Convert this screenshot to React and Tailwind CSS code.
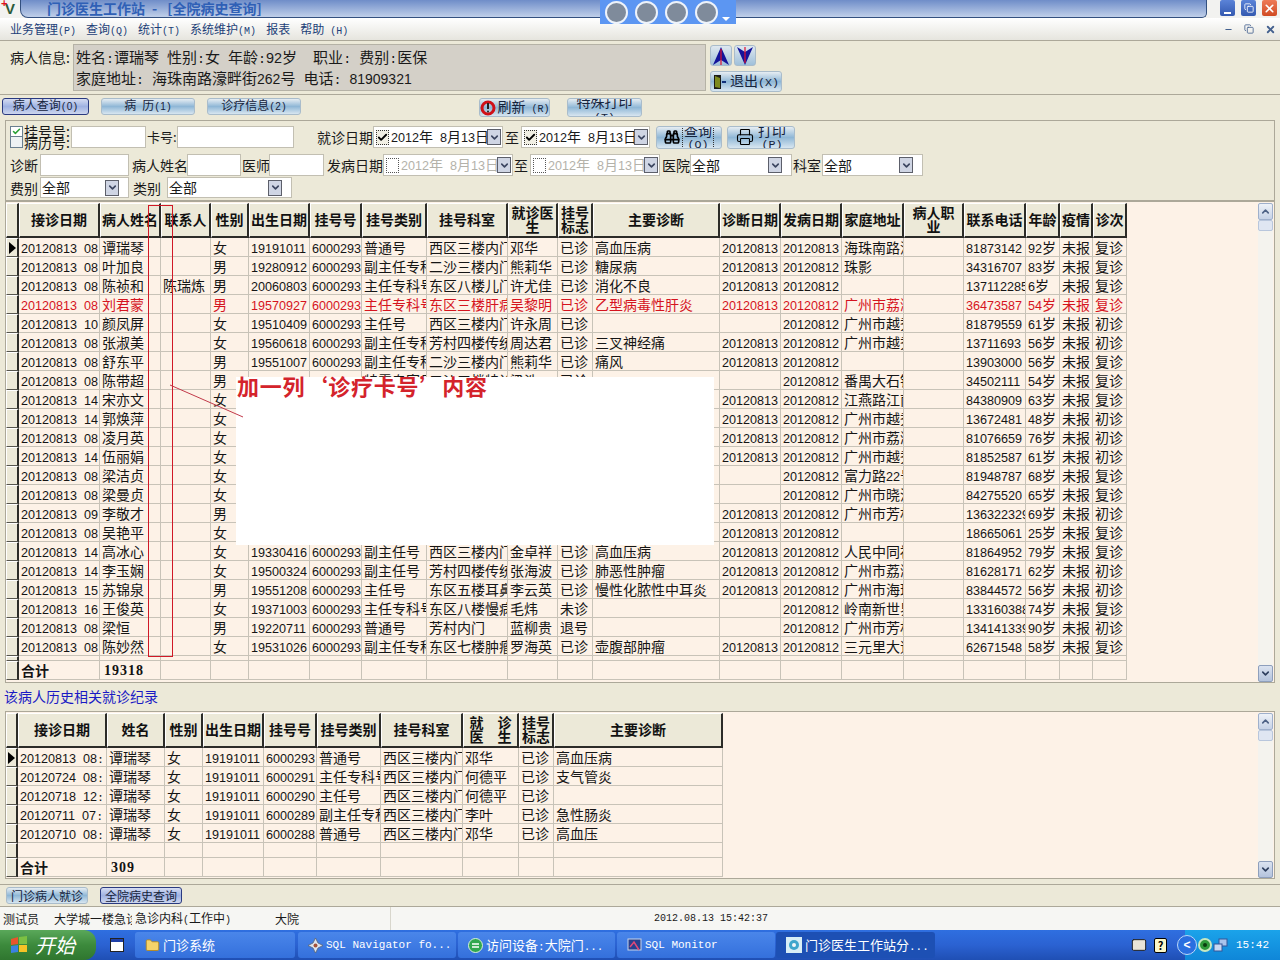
import { Fragment } from 'react';
import { Binoculars, ChevronDown, ChevronUp, Printer, Folder, Keyboard, X, Minus, Copy, Check } from 'lucide-react';

const mainHead = ['接诊日期', '病人姓名', '联系人', '性别', '出生日期', '挂号号', '挂号类别', '挂号科室', '就诊医\n生', '挂号\n标志', '主要诊断', '诊断日期', '发病日期', '家庭地址', '病人职\n业', '联系电话', '年龄', '疫情', '诊次'];

// 时间 姓名 联系人 性别 出生 类别 科室 医生 标志 诊断 诊断日期 发病日期 地址 电话 年龄 诊次
const mainRows = [
  ['08', '谭瑞琴', '', '女', '19191011', '普通号', '西区三楼内门诊', '邓华', '已诊', '高血压病', '20120813', '20120813', '海珠南路濠畔街', '81873142', '92岁', '复诊'],
  ['08', '叶加良', '', '男', '19280912', '副主任专科号', '二沙三楼内门诊', '熊莉华', '已诊', '糖尿病', '20120813', '20120812', '珠影', '34316707', '83岁', '复诊'],
  ['08', '陈祯和', '陈瑞炼', '男', '20060803', '主任专科号', '东区八楼儿门诊', '许尤佳', '已诊', '消化不良', '20120813', '20120812', '', '137112285', '6岁', '复诊'],
  ['08', '刘君蒙', '', '男', '19570927', '主任专科号', '东区三楼肝病科', '吴黎明', '已诊', '乙型病毒性肝炎', '20120813', '20120812', '广州市荔湾区', '36473587', '54岁', '复诊'],
  ['10', '颜凤屏', '', '女', '19510409', '主任号', '西区三楼内门诊', '许永周', '已诊', '', '', '20120812', '广州市越秀区', '81879559', '61岁', '初诊'],
  ['08', '张淑美', '', '女', '19560618', '副主任专科号', '芳村四楼传统科', '周达君', '已诊', '三叉神经痛', '20120813', '20120812', '广州市越秀区', '13711693', '56岁', '初诊'],
  ['08', '舒东平', '', '男', '19551007', '副主任专科号', '二沙三楼内门诊', '熊莉华', '已诊', '痛风', '20120813', '20120812', '', '13903000', '56岁', '复诊'],
  ['08', '陈带超', '', '男', '', '特需专家号', '二沙三楼特诊', '梁浩', '已诊', '', '', '20120812', '番禺大石镇', '34502111', '54岁', '复诊'],
  ['14', '宋亦文', '', '女', '', '', '', '', '', '', '20120813', '20120812', '江燕路江南', '84380909', '63岁', '复诊'],
  ['14', '郭焕萍', '', '女', '', '', '', '', '', '', '20120813', '20120812', '广州市越秀区', '13672481', '48岁', '初诊'],
  ['08', '凌月英', '', '女', '', '', '', '', '', '', '20120813', '20120812', '广州市荔湾区', '81076659', '76岁', '初诊'],
  ['14', '伍丽娟', '', '女', '', '', '', '', '', '', '20120813', '20120812', '广州市越秀区', '81852587', '61岁', '初诊'],
  ['08', '梁洁贞', '', '女', '', '', '', '', '', '', '', '20120812', '富力路22号', '81948787', '68岁', '复诊'],
  ['08', '梁曼贞', '', '女', '', '', '', '', '', '', '', '20120812', '广州市晓港', '84275520', '65岁', '复诊'],
  ['09', '李敬才', '', '男', '', '', '', '', '', '', '20120813', '20120812', '广州市芳村', '136322329', '69岁', '初诊'],
  ['08', '吴艳平', '', '女', '', '', '', '', '', '', '20120813', '20120812', '', '18665061', '25岁', '复诊'],
  ['14', '高冰心', '', '女', '19330416', '副主任号', '西区三楼内门诊', '金卓祥', '已诊', '高血压病', '20120813', '20120812', '人民中同福', '81864952', '79岁', '复诊'],
  ['14', '李玉娴', '', '女', '19500324', '副主任号', '芳村四楼传统科', '张海波', '已诊', '肺恶性肿瘤', '20120813', '20120812', '广州市荔湾区', '81628171', '62岁', '初诊'],
  ['15', '苏锦泉', '', '男', '19551208', '主任号', '东区五楼耳鼻喉', '李云英', '已诊', '慢性化脓性中耳炎', '20120813', '20120812', '广州市海珠区', '83844572', '56岁', '初诊'],
  ['16', '王俊英', '', '女', '19371003', '主任专科号', '东区八楼慢病科', '毛炜', '未诊', '', '', '20120812', '岭南新世界', '133160388', '74岁', '复诊'],
  ['08', '梁恒', '', '男', '19220711', '普通号', '芳村内门', '蓝柳贵', '退号', '', '', '20120812', '广州市芳村', '134141339', '90岁', '初诊'],
  ['08', '陈妙然', '', '女', '19531026', '副主任专科号', '东区七楼肿瘤科', '罗海英', '已诊', '壶腹部肿瘤', '20120813', '20120812', '三元里大道', '62671548', '58岁', '复诊'],
];

const histHead = ['接诊日期', '姓名', '性别', '出生日期', '挂号号', '挂号类别', '挂号科室', '就　诊\n医　生', '挂号\n标志', '主要诊断'];
const histRows = [
  ['20120813 08:', '谭瑞琴', '女', '19191011', '6000293', '普通号', '西区三楼内门诊', '邓华', '已诊', '高血压病'],
  ['20120724 08:', '谭瑞琴', '女', '19191011', '6000291', '主任专科号', '西区三楼内门诊', '何德平', '已诊', '支气管炎'],
  ['20120718 12:', '谭瑞琴', '女', '19191011', '6000290', '主任号', '西区三楼内门诊', '何德平', '已诊', ''],
  ['20120711 07:', '谭瑞琴', '女', '19191011', '6000289', '副主任专科号', '西区三楼内门诊', '李叶', '已诊', '急性肠炎'],
  ['20120710 08:', '谭瑞琴', '女', '19191011', '6000288', '普通号', '西区三楼内门诊', '邓华', '已诊', '高血压'],
];

function toMainCells(r) {
  return [`20120813 ${r[0]}`, r[1], r[2], r[3], r[4], r[4] ? '6000293' : '', r[5], r[6], r[7], r[8], r[9], r[10], r[11], r[12], '', r[13], r[14], '未报', r[15]];
}

// digits and latin get their own faces, close to the bitmap font of the original
function T({ children, mono = 'text-[11.67px]', digit = 'text-[12.6px]' }) {
  if (children == null || children === '') return null;
  const parts = String(children).split(/([0-9]+|[\x20-\x7e]+?(?=[0-9]|[^\x20-\x7e]|$))/);
  return parts.map((p, i) => {
    if (!p) return null;
    if (/^[0-9]+$/.test(p)) return <span key={i} className={`font-['Liberation_Sans',sans-serif] ${digit}`}>{p}</span>;
    if (/^[\x20-\x7e]+$/.test(p)) return <span key={i} className={`whitespace-pre font-['Liberation_Mono',monospace] ${mono}`}>{p}</span>;
    return <Fragment key={i}>{p}</Fragment>;
  });
}

function HeadCell({ children }) {
  return (
    <div className="flex items-center justify-center overflow-hidden bg-[#ece9d8] border-t border-l border-t-white border-l-white border-r-2 border-b-2 border-r-[#2c2c28] border-b-[#2c2c28] pb-[2px] text-center text-[14px] font-bold leading-[14px] whitespace-pre text-[#111]">
      {children}
    </div>
  );
}

function Indicator({ active }) {
  return (
    <div className="flex items-center justify-center bg-[#ece9d8] border-t border-l border-t-white border-l-white border-r-2 border-b border-r-[#2c2c28] border-b-[#55544c]">
      {active && <div className="h-0 w-0 border-y-[6px] border-l-[7px] border-y-transparent border-l-black" />}
    </div>
  );
}

function Cell({ children, red, bold }) {
  return (
    <div className={`overflow-hidden whitespace-nowrap border-r border-b border-[#c8c3b8] bg-[#fdf2e7] pl-[2px] text-[14px] leading-[18px] ${red ? 'text-[#d5141e]' : 'text-[#151515]'} ${bold ? 'font-bold' : ''}`}>
      <T>{children}</T>
    </div>
  );
}

function ScrollBar() {
  return (
    <div className="flex w-[15px] flex-col justify-between bg-[#f4f3ee]">
      <div>
        <div className="flex h-[17px] items-center justify-center rounded-[2px] border border-[#9fb0cc] bg-gradient-to-b from-[#eef2f8] to-[#c6d2e6]">
          <ChevronUp size={11} strokeWidth={3.5} className="text-[#4d6185]" />
        </div>
        <div className="h-[11px] rounded-[2px] border border-[#b8c6dc] bg-[#dfe6f2]" />
      </div>
      <div className="flex h-[17px] items-center justify-center rounded-[2px] border border-[#8e9fbc] bg-gradient-to-b from-[#dbe3f0] to-[#b4c3dc]">
        <ChevronDown size={11} strokeWidth={3.5} className="text-[#2e3f5f]" />
      </div>
    </div>
  );
}

function Grid({ cols, head, rows, total, spacer, width }) {
  const n = head.length;
  return (
    <div className={`${width} shrink-0`}>
      <div className={`grid h-[35px] ${cols}`}>
        <HeadCell />
        {head.map((h) => <HeadCell key={h}>{h}</HeadCell>)}
      </div>
      <div className={`grid auto-rows-[19px] ${cols}`}>
        {rows.map((r, i) => (
          <Fragment key={i}>
            <Indicator active={i === 0} />
            {r.cells.map((c, j) => <Cell key={j} red={r.red}>{c}</Cell>)}
          </Fragment>
        ))}
      </div>
      <div className={`grid ${spacer} ${cols}`}>
        <Indicator />
        {Array.from({ length: n }).map((_, j) => <Cell key={j} />)}
      </div>
      <div className={`grid h-[19px] ${cols}`}>
        <Indicator />
        <Cell bold>合计</Cell>
        <div className="overflow-hidden border-r border-b border-[#c8c3b8] bg-[#fdf2e7] pl-[4px] font-['Liberation_Serif',serif] text-[14px] font-bold leading-[20px] tracking-[1px] text-[#111]">{total}</div>
        {Array.from({ length: n - 2 }).map((_, j) => <Cell key={j} />)}
      </div>
    </div>
  );
}

function SkinButton({ children, active, className = '' }) {
  return (
    <div className={`flex shrink-0 items-center justify-center overflow-hidden rounded-[3px] border text-[14px] leading-[14px] text-[#15233c] ${active ? 'border-[#2a3a80] bg-gradient-to-b from-[#d5dcf2] via-[#9fb2e2] to-[#cdd6ee]' : 'border-[#a9bccb] bg-gradient-to-b from-[#e6edf2] via-[#8fb7d6] to-[#d8e6f0]'} ${className}`}>
      {children}
    </div>
  );
}

function Field({ className }) {
  return <div className={`shrink-0 border border-[#c2bfb2] bg-white ${className}`} />;
}

function Label({ children, className }) {
  return <div className={`shrink-0 whitespace-nowrap text-[14px] leading-[20px] text-[#1a1a1a] ${className}`}><T>{children}</T></div>;
}

function DropBtn() {
  return (
    <div className="flex h-[16px] w-[14px] shrink-0 items-center justify-center border border-[#5c5f6a] bg-[#cfd5e4]">
      <ChevronDown size={11} strokeWidth={3.5} className="text-[#3b4560]" />
    </div>
  );
}

function Combo({ className, value = '全部' }) {
  return (
    <div className={`flex shrink-0 items-center justify-between border border-[#c2bfb2] bg-white pl-[1px] pr-[9px] text-[14px] text-[#1a1a1a] ${className}`}>
      <span>{value}</span>
      <DropBtn />
    </div>
  );
}

function DatePicker({ className, disabled }) {
  return (
    <div className={`flex shrink-0 items-center border border-[#c2bfb2] bg-white pl-[2px] pr-[1px] text-[14px] ${disabled ? 'text-[#b4b2aa]' : 'text-[#1a1a1a]'} ${className}`}>
      <div className={`flex h-[15px] w-[13px] shrink-0 items-center justify-center border border-dotted ${disabled ? 'border-[#555]' : 'border-[#333] bg-[#f1efe4]'}`}>
        {!disabled && <Check size={11} strokeWidth={4} className="text-black" />}
      </div>
      <div className="min-w-0 flex-1 overflow-hidden whitespace-nowrap pl-[2px]"><T>2012年 8月13日</T></div>
      <DropBtn />
    </div>
  );
}

function TaskBtn({ children, active, className }) {
  return (
    <div className={`flex h-[26px] shrink-0 items-center gap-[3px] overflow-hidden rounded-[3px] pl-[10px] text-[13px] text-white ${active ? 'bg-[#1d50b4]' : 'bg-gradient-to-b from-[#4a86ea] to-[#3470dc]'} ${className}`}>
      {children}
    </div>
  );
}

function ArrowIcon({ down }) {
  return (
    <svg width="18" height="20" viewBox="0 0 18 20">
      <path d={down ? 'M1 1 L9 6 L17 1 L9 19 Z' : 'M9 1 L17 19 L9 14 L1 19 Z'} fill="#14149a" />
      <path d={down ? 'M9 1 V17' : 'M9 3 V19'} stroke="#e01030" strokeWidth="1.2" />
    </svg>
  );
}

export default function App() {
  const grid1 = "grid-cols-[13px_81px_61px_50px_38px_61px_52px_65px_81px_50px_35px_127px_61px_61px_62px_60px_62px_34px_33px_34px]";
  const grid2 = "grid-cols-[12px_89px_58px_38px_61px_53px_64px_82px_56px_35px_169px]";

  return (
    <div className="relative h-[960px] w-[1280px] overflow-hidden bg-[#ece9d8] font-['Noto_Sans_CJK_SC','Liberation_Sans',sans-serif]">
      {/* 标题栏 */}
      <div className="flex h-[18px] bg-[#f2f2f0]">
        <div className="relative flex w-[20px] items-center justify-center font-['Liberation_Sans',sans-serif] text-[15px] font-bold leading-[16px] text-[#2c5a3a]">
          V
          <span className="absolute left-[1px] top-[-2px] text-[11px] leading-[11px] text-[#e0101c]">+</span>
        </div>
        <div className="flex h-[18px] w-[1187px] items-center rounded-bl-[8px] rounded-br-[5px] border-b border-r border-l border-[#33507f] bg-gradient-to-b from-[#6f8dc8] to-[#c0cfe9] pl-[26px] text-[14px] font-bold text-[#2f60b6]">
          门诊医生工作站 <span className="ml-[7px]">-</span> <span className="ml-[10px]">[全院病史查询]</span>
        </div>
        <div className="flex flex-1 items-start justify-end gap-[4px] pr-[3px]">
          <div className="flex h-[16px] w-[15px] items-end justify-center rounded-[2px] bg-gradient-to-b from-[#5b83d8] to-[#3459b0] pb-[2px]"><div className="h-[2px] w-[7px] bg-white" /></div>
          <div className="ml-[2px] flex h-[16px] w-[15px] items-center justify-center rounded-[2px] bg-gradient-to-b from-[#5b83d8] to-[#3459b0]"><Copy size={10} strokeWidth={2} className="text-white" /></div>
          <div className="ml-[2px] flex h-[16px] w-[15px] items-center justify-center rounded-[2px] bg-gradient-to-b from-[#ee7a56] to-[#d04a22]"><X size={13} strokeWidth={3} className="text-white" /></div>
        </div>
      </div>

      {/* 菜单 */}
      <div className="flex h-[23px] items-center border-b border-[#aca899] bg-gradient-to-b from-white to-[#e6e5de] pl-[10px] text-[12px] text-[#1d3f78]">
        <div className="flex gap-[10px]">
          <span><T mono="text-[10px]">业务管理(P)</T></span>
          <span><T mono="text-[10px]">查询(Q)</T></span>
          <span><T mono="text-[10px]">统计(T)</T></span>
          <span><T mono="text-[10px]">系统维护(M)</T></span>
          <span>报表</span>
          <span><T mono="text-[10px]">帮助 (H)</T></span>
        </div>
        <div className="ml-auto flex items-center gap-[11px] pr-[4px] text-[#44618f]">
          <Minus size={9} strokeWidth={3} />
          <Copy size={10} strokeWidth={2} />
          <X size={11} strokeWidth={4} />
        </div>
      </div>

      {/* 病人信息 */}
      <div className="flex h-[54px] border-b border-[#aca899]">
        <div className="w-[73px] shrink-0 pl-[10px] pt-[6px] text-[14px] leading-[20px] text-[#1a1a1a]">病人信息:</div>
        <div className="mt-[3px] h-[47px] w-[633px] shrink-0 border border-[#b5b2a6] bg-[#d4d0c8] pl-[2px] pt-[3px] text-[15px] leading-[18px] text-[#1a1a1a]">
          <div><T mono="text-[13.33px]" digit="text-[14.4px]">姓名:谭瑞琴 性别:女 年龄:92岁  职业: 费别:医保</T></div>
          <div><T mono="text-[13.33px]" digit="text-[14px]">家庭地址: 海珠南路濠畔街262号 电话: 81909321</T></div>
        </div>
        <div className="ml-[4px] mt-[4px] flex flex-col">
          <div className="flex gap-[2px]">
            <div className="flex h-[21px] w-[22px] items-center justify-center rounded-[3px] border border-[#a9bccb] bg-gradient-to-b from-[#dfe8ef] to-[#9fc0da]"><ArrowIcon /></div>
            <div className="flex h-[21px] w-[22px] items-center justify-center rounded-[3px] border border-[#a9bccb] bg-gradient-to-b from-[#dfe8ef] to-[#9fc0da]"><ArrowIcon down /></div>
          </div>
          <SkinButton className="mt-[5px] h-[21px] w-[72px] gap-[3px]">
            <svg width="14" height="16" viewBox="0 0 14 16">
              <path d="M1 1 H8 V15 H1 Z" fill="#1c1c18" />
              <path d="M2 2 L7 4 V14 L2 13 Z" fill="#7d8a1e" />
              <path d="M9 8 H13" stroke="#12307a" strokeWidth="2" />
            </svg>
            <span><T>退出(X)</T></span>
          </SkinButton>
        </div>
      </div>

      {/* 页签 */}
      <div className="flex h-[25px] items-start pl-[2px] pt-[3px]">
        <SkinButton active className="h-[17px] w-[87px]"><span className="text-[12px]"><T mono="text-[10px]" digit="text-[10px]">病人查询(0)</T></span></SkinButton>
        <SkinButton className="ml-[12px] h-[17px] w-[94px]"><span className="text-[12px]"><T mono="text-[10px]" digit="text-[10px]">病 历(1)</T></span></SkinButton>
        <SkinButton className="ml-[12px] h-[17px] w-[94px]"><span className="text-[12px]"><T mono="text-[10px]" digit="text-[10px]">诊疗信息(2)</T></span></SkinButton>
        <SkinButton className="ml-[178px] h-[19px] w-[71px] gap-[2px]">
          <svg className="shrink-0" width="16" height="16" viewBox="0 0 16 16">
            <circle cx="8" cy="8" r="6" fill="none" stroke="#d01018" strokeWidth="3" />
            <path d="M8 3 V9" stroke="#222" strokeWidth="2" />
            <circle cx="8" cy="11.5" r="1" fill="#222" />
          </svg>
          <span className="whitespace-nowrap"><T mono="text-[10px]">刷新 (R)</T></span>
        </SkinButton>
        <SkinButton className="ml-[17px] h-[19px] w-[75px] items-start">
          <span className="mt-[-5px] whitespace-pre-line text-center leading-[14px]">{'特殊打印\n'}<T>(T)</T></span>
        </SkinButton>
      </div>

      {/* 查询条件 */}
      <div className="mx-[5px] h-[81px] border border-[#aca899] pt-[5px]">
        <div className="flex h-[22px] items-center">
          <div className="ml-[4px] flex w-[13px] shrink-0 flex-col">
            <div className="flex h-[11px] items-center justify-center border border-[#6a7f90] bg-white"><Check size={9} strokeWidth={4} className="text-[#29a035]" /></div>
            <div className="h-[11px] border border-t-0 border-[#6a7f90] bg-[#eef2f4]" />
          </div>
          <div className="ml-[1px] w-[46px] shrink-0 text-[14px] leading-[11px] text-[#1a1a1a]">
            <div>挂号号:</div>
            <div>病历号:</div>
          </div>
          <Field className="ml-[1px] h-[22px] w-[75px]" />
          <div className="ml-[1px] w-[30px] shrink-0 whitespace-nowrap text-[13px] leading-[20px] text-[#1a1a1a]">卡号:</div>
          <Field className="h-[22px] w-[117px]" />
          <Label className="ml-[23px] w-[56px]">就诊日期</Label>
          <DatePicker className="h-[22px] w-[130px]" />
          <Label className="ml-[2px] w-[16px]">至</Label>
          <DatePicker className="h-[22px] w-[129px]" />
          <SkinButton className="ml-[6px] h-[23px] w-[66px] gap-[2px]">
            <Binoculars size={16} strokeWidth={2.5} className="text-black" />
            <span className="whitespace-pre-line border-x border-dotted border-[#333] px-[1px] text-center leading-[12px]">{'查询\n'}<T>(Q)</T></span>
          </SkinButton>
          <SkinButton className="ml-[5px] h-[23px] w-[68px] gap-[4px]">
            <Printer size={18} strokeWidth={1.5} className="text-black" />
            <span className="whitespace-pre-line text-center leading-[12px]">{'打印\n'}<T>(P)</T></span>
          </SkinButton>
        </div>
        <div className="mt-[6px] flex h-[22px] items-center">
          <Label className="ml-[4px] w-[30px]">诊断</Label>
          <Field className="h-[22px] w-[89px]" />
          <Label className="ml-[3px] w-[55px]">病人姓名</Label>
          <Field className="h-[22px] w-[54px]" />
          <Label className="w-[28px] pl-[1px]">医师</Label>
          <Field className="h-[22px] w-[55px]" />
          <Label className="ml-[3px] w-[56px]">发病日期</Label>
          <DatePicker disabled className="h-[22px] w-[130px]" />
          <Label className="w-[17px] pl-[1px]">至</Label>
          <DatePicker disabled className="h-[22px] w-[130px]" />
          <Label className="ml-[2px] w-[28px]">医院</Label>
          <Combo className="h-[22px] w-[102px]" />
          <Label className="ml-[1px] w-[29px]">科室</Label>
          <Combo className="h-[22px] w-[101px]" />
        </div>
        <div className="mt-[1px] flex h-[21px] items-center">
          <Label className="ml-[4px] w-[30px]">费别</Label>
          <Combo className="h-[21px] w-[89px]" />
          <Label className="ml-[4px] w-[34px]">类别</Label>
          <Combo className="h-[21px] w-[125px]" />
        </div>
      </div>

      {/* 全院病史列表 */}
      <div className="mx-[5px] flex h-[482px] border border-[#aca899] bg-[#fdf2e7] pt-[1px] pr-[1px]">
        <Grid
          cols={grid1}
          width="w-[1121px]"
          head={mainHead}
          rows={mainRows.map((r, i) => ({ cells: toMainCells(r), red: i === 3 }))}
          total="19318"
          spacer="h-[5px]"
        />
        <div className="flex-1" />
        <ScrollBar />
      </div>

      <div className="h-[28px] pl-[4px] pt-[3px] text-[14px] leading-[20px] text-[#1a1ac4]">该病人历史相关就诊纪录</div>

      {/* 历史就诊 */}
      <div className="mx-[5px] flex h-[168px] border border-[#aca899] bg-[#fdf2e7] pt-[1px] pr-[1px]">
        <Grid
          cols={grid2}
          width="w-[717px]"
          head={histHead}
          rows={histRows.map((r) => ({ cells: r }))}
          total="309"
          spacer="h-[15px]"
        />
        <div className="flex-1" />
        <ScrollBar />
      </div>

      {/* 底部页签 */}
      <div className="mt-[5px] flex h-[23px] items-center border-t border-b border-[#aca899] pl-[6px]">
        <SkinButton className="h-[17px] w-[82px]"><span className="text-[12px]">门诊病人就诊</span></SkinButton>
        <SkinButton active className="ml-[12px] h-[17px] w-[82px]"><span className="text-[12px]">全院病史查询</span></SkinButton>
      </div>

      {/* 状态栏 */}
      <div className="flex h-[23px] items-center bg-[#f6f6f3] text-[12px] text-[#1a1a1a]">
        <div className="w-[51px] shrink-0 pl-[3px]">测试员</div>
        <div className="w-[81px] shrink-0 overflow-hidden whitespace-nowrap pl-[3px]">大学城一楼急诊</div>
        <div className="w-[140px] shrink-0 whitespace-nowrap pl-[3px]"><T mono="text-[10px]">急诊内科(工作中)</T></div>
        <div className="flex h-full w-[119px] shrink-0 items-center border-r border-[#d8d6cc] pl-[3px]">大院</div>
        <div className="ml-[263px] font-['Liberation_Mono',monospace] text-[10px]">2012.08.13 15:42:37</div>
      </div>

      {/* 任务栏 */}
      <div className="flex h-[30px] items-center bg-gradient-to-b from-[#2f6fe0] via-[#2b62d2] to-[#1f4fb4] text-white">
        <div className="flex h-full w-[96px] shrink-0 items-center gap-[6px] rounded-r-[12px] bg-gradient-to-b from-[#5aa85a] via-[#3c8a3c] to-[#2f762f] pl-[9px] text-[20px] italic leading-[20px]">
          <svg width="20" height="20" viewBox="0 0 20 20">
            <path d="M2 4 L9 2 V9 L2 10 Z" fill="#e8552c" />
            <path d="M10 2 L18 1 V9 L10 9 Z" fill="#7cc043" />
            <path d="M2 11 L9 10 V17 L2 18 Z" fill="#3b82e0" />
            <path d="M10 10 L18 10 V17 L10 17 Z" fill="#f6c326" />
          </svg>
          开始
        </div>
        <div className="ml-[14px] flex h-[14px] w-[14px] shrink-0 flex-col border border-[#222] bg-white"><div className="h-[3px] bg-[#1d3fa8]" /></div>
        <TaskBtn className="ml-[11px] w-[160px]"><Folder size={15} fill="#f5d36a" strokeWidth={1.5} className="text-[#b58a22]" />门诊系统</TaskBtn>
        <TaskBtn className="ml-[3px] w-[158px]">
          <svg width="15" height="15" viewBox="0 0 15 15"><path d="M7.5 0 L10 5 L15 7.5 L10 10 L7.5 15 L5 10 L0 7.5 L5 5 Z" fill="#dde4ee" stroke="#5a6472" strokeWidth="0.8" /><circle cx="7.5" cy="7.5" r="2" fill="#a5533a" /></svg>
          <span className="overflow-hidden whitespace-nowrap font-['Liberation_Mono',monospace] text-[11px]">SQL Navigator fo...</span>
        </TaskBtn>
        <TaskBtn className="ml-[2px] w-[157px]">
          <svg width="15" height="15" viewBox="0 0 15 15"><circle cx="7.5" cy="7.5" r="7" fill="#30a84e" stroke="#d8f0dc" strokeWidth="1" /><path d="M4 6 H11 M4 9 H11" stroke="white" strokeWidth="1.5" /></svg>
          <span className="overflow-hidden whitespace-nowrap"><T mono="text-[11px]">访问设备:大院门...</T></span>
        </TaskBtn>
        <TaskBtn className="ml-[2px] w-[158px]">
          <svg width="15" height="15" viewBox="0 0 15 15"><rect x="1" y="1" width="13" height="11" fill="#27408e" stroke="#c8d4e8" /><path d="M3 9 L7 4 L12 12" stroke="#e04878" strokeWidth="1.5" fill="none" /></svg>
          <span className="overflow-hidden whitespace-nowrap font-['Liberation_Mono',monospace] text-[11px]">SQL Monitor</span>
        </TaskBtn>
        <TaskBtn active className="ml-[1px] w-[159px]">
          <svg width="16" height="16" viewBox="0 0 16 16"><rect width="16" height="16" fill="#d8eef6" /><circle cx="8" cy="8" r="5" fill="#3ea6cc" /><circle cx="8" cy="8" r="2" fill="#f2f6f8" /></svg>
          <span className="overflow-hidden whitespace-nowrap"><T mono="text-[11px]">门诊医生工作站分...</T></span>
        </TaskBtn>
        <div className="ml-[196px] flex shrink-0 items-center gap-[7px]">
          <Keyboard size={16} fill="#e8e4d8" strokeWidth={1.5} className="text-[#222]" />
          <div className="flex h-[15px] w-[13px] items-center justify-center rounded-[2px] border border-black bg-[#fbf6c8] text-[11px] font-bold leading-[13px] text-black">?</div>
        </div>
        <div className="ml-[18px] flex h-full flex-1 items-center bg-gradient-to-b from-[#1ba3ea] to-[#0f86d8]">
          <div className="ml-[-8px] flex h-[20px] w-[20px] shrink-0 items-center justify-center rounded-full border border-[#bcd8f8] bg-[#2a6fe0] font-['Liberation_Sans',sans-serif] text-[12px] font-bold leading-[12px]">&lt;</div>
          <div className="ml-[1px] flex h-[14px] w-[14px] shrink-0 items-center justify-center rounded-full border-2 border-[#c8e8c0] bg-[#2f9a3a]"><div className="h-[4px] w-[4px] rounded-full bg-[#0b3d10]" /></div>
          <svg className="ml-[1px] shrink-0" width="15" height="15" viewBox="0 0 15 15"><rect x="6" y="1" width="8" height="7" fill="#a8c4ec" stroke="#33569a" /><rect x="1" y="6" width="8" height="7" fill="#c8d8f2" stroke="#33569a" /></svg>
          <span className="ml-[8px] font-['Liberation_Mono',monospace] text-[11px]">15:42</span>
        </div>
      </div>

      {/* 浮动工具条 */}
      <div className="absolute left-[600px] top-0 flex h-[24px] w-[136px] items-center gap-[7px] bg-[#5c96f2] pl-[5px]">
        <div className="h-[23px] w-[23px] rounded-full border-2 border-[#eef3fa] bg-[#7f8b9b]" />
        <div className="h-[23px] w-[23px] rounded-full border-2 border-[#eef3fa] bg-[#7f8b9b]" />
        <div className="h-[23px] w-[23px] rounded-full border-2 border-[#eef3fa] bg-[#7f8b9b]" />
        <div className="h-[23px] w-[23px] rounded-full border-2 border-[#eef3fa] bg-[#7f8b9b]" />
        <div className="mt-[14px] ml-[-3px] h-0 w-0 border-x-[4px] border-t-[4px] border-x-transparent border-t-white" />
      </div>

      {/* 截图上的批注 */}
      <div className="absolute left-[236px] top-[377px] h-[168px] w-[478px] bg-white" />
      <div className="absolute left-[148px] top-[205px] h-[452px] w-[25px] border border-[#d01826]" />
      <svg className="absolute left-[168px] top-[383px]" width="78" height="36" viewBox="0 0 78 36">
        <path d="M2 2 L75 34" stroke="#c23a4a" strokeWidth="1" />
      </svg>
      <div className="absolute left-[237px] top-[371px] whitespace-nowrap text-[22px] font-bold leading-[28px] tracking-[0.8px] text-[#d4232b]">加一列‘诊疗卡号’内容</div>
    </div>
  );
}
